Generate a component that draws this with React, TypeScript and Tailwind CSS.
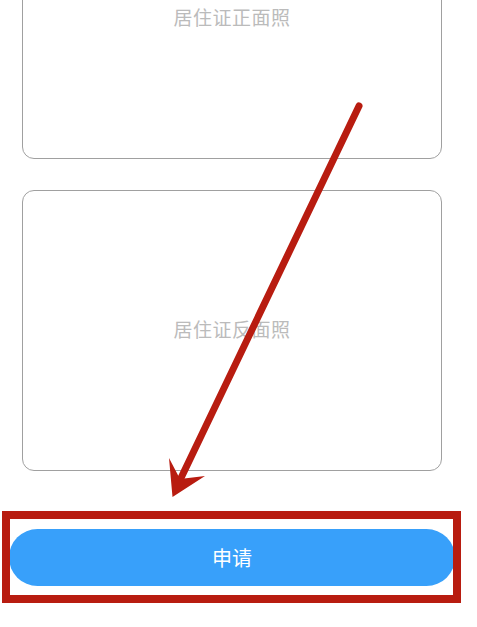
export default function App() {
  return (
    <div
      className="relative h-[627px] w-[477px] overflow-hidden bg-white"
      style={{ fontFamily: '"Noto Sans CJK SC", "Noto Sans", sans-serif' }}
    >
      <div className="-mt-[123px] flex flex-col gap-[31px] pl-[22px] pr-[35px]">
        <div className="flex h-[282px] items-center justify-center rounded-[12px] border-[1.5px] border-[#a0a0a0]">
          <span className="-mt-[2px] text-[19px] tracking-[0.5px] text-[#bbbbbb]">居住证正面照</span>
        </div>
        <div className="flex h-[281px] items-center justify-center rounded-[12px] border-[1.5px] border-[#a0a0a0]">
          <span className="-mt-[2px] text-[19px] tracking-[0.5px] text-[#bbbbbb]">居住证反面照</span>
        </div>
      </div>

      <div className="mt-[58px] pl-[9px] pr-[22px]">
        <button
          type="button"
          className="flex h-[57px] w-full items-center justify-center rounded-full bg-[#38a0fa] text-[20px] text-white"
        >
          申请
        </button>
      </div>

      {/* annotation: highlight box */}
      <div className="pointer-events-none absolute left-[2px] top-[511px] h-[92px] w-[459px] border-[8px] border-[#b81c10]" />

      {/* annotation: arrow */}
      <svg className="pointer-events-none absolute left-0 top-0" width="477" height="627" viewBox="0 0 477 627">
        <line x1="359" y1="106" x2="181" y2="478" stroke="#b81c10" strokeWidth="7" strokeLinecap="round" />
        <polygon points="169,458 180,479 205,476 172.5,497" fill="#b81c10" />
      </svg>
    </div>
  );
}
